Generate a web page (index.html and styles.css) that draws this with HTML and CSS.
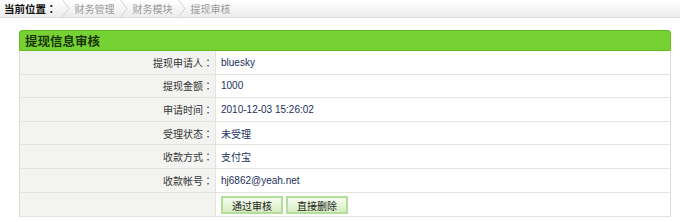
FILE: index.html
```html
<!DOCTYPE html>
<html lang="zh-CN">
<head>
  <meta charset="UTF-8">
  <title>提现审核</title>
  <link rel="stylesheet" href="styles.css">
</head>
<body>
<div class="crumbs">
  <span class="here" lang="zh-TW">当前位置：</span>
  <span class="sep"><svg width="8" height="17" viewBox="0 0 8 17"><path d="M0.5 0 L7 8.5 L0.5 17" fill="none" stroke="#d2d2d2" stroke-width="1"/></svg></span>
  <span class="crumb">财务管理</span>
  <span class="sep"><svg width="8" height="17" viewBox="0 0 8 17"><path d="M0.5 0 L7 8.5 L0.5 17" fill="none" stroke="#d2d2d2" stroke-width="1"/></svg></span>
  <span class="crumb">财务模块</span>
  <span class="sep"><svg width="8" height="17" viewBox="0 0 8 17"><path d="M0.5 0 L7 8.5 L0.5 17" fill="none" stroke="#d2d2d2" stroke-width="1"/></svg></span>
  <span class="crumb">提现审核</span>
</div>

<div class="panel">
  <div class="panel-title">提现信息审核</div>
  <table class="info">
    <tr><th lang="zh-TW">提现申请人：</th><td>bluesky</td></tr>
    <tr><th lang="zh-TW">提现金额：</th><td>1000</td></tr>
    <tr><th lang="zh-TW">申请时间：</th><td>2010-12-03 15:26:02</td></tr>
    <tr><th lang="zh-TW">受理状态：</th><td>未受理</td></tr>
    <tr><th lang="zh-TW">收款方式：</th><td>支付宝</td></tr>
    <tr><th lang="zh-TW">收款帐号：</th><td>hj6862@yeah.net</td></tr>
    <tr><th></th><td class="actions"><button class="btn">通过审核</button><button class="btn">直接删除</button></td></tr>
  </table>
</div>
</body>
</html>
```

FILE: styles.css
```css
body {
  margin: 0;
  background: #fff;
  font-family: "Liberation Sans", "Noto Sans CJK SC", sans-serif;
  font-size: 10px;
  color: #333;
}

.crumbs {
  display: flex;
  align-items: center;
  height: 17px;
  padding-left: 4px;
  background: linear-gradient(#ffffff, #ececec);
  border-bottom: 1px solid #dcdcdc;
}

.crumbs .here {
  font-family: "Noto Sans CJK TC", sans-serif;
  font-weight: bold;
  font-size: 10.5px;
  color: #111;
}

.crumbs .sep {
  display: flex;
  margin: 0 5px 0 5px;
}

.crumbs .crumb {
  color: #999;
}

.panel {
  margin: 12px 9px 0 19px;
  width: 652px;
}

.panel-title {
  height: 19px;
  line-height: 19px;
  padding-left: 5px;
  background: #76d232;
  border: 1px solid #62bb22;
  border-radius: 3px 3px 0 0;
  font-family: "Noto Sans CJK SC", sans-serif;
  font-weight: bold;
  font-size: 12.5px;
  color: #1a3503;
}

.info {
  width: 100%;
  border-collapse: collapse;
  border: 1px solid #dcdcd2;
  border-top: none;
}

.info th,
.info td {
  height: 22.6px;
  padding: 0 5px;
  border-bottom: 1px solid #e4e4da;
  font-weight: normal;
}

.info th {
  width: 188px;
  text-align: right;
  padding-right: 2px;
  background: #f3f3f1;
  border-right: 1px solid #e4e4da;
  font-family: "Noto Sans CJK TC", sans-serif;
  color: #333;
}

.info td {
  color: #22305c;
  background: #fff;
}

.info .actions {
  padding-top: 1px;
}

.btn {
  height: 18px;
  width: 62px;
  margin-right: 3px;
  padding: 0;
  border: 2px solid #b4dc9a;
  background: linear-gradient(#f6fcef, #d5edc3);
  font-family: "Noto Sans CJK SC", sans-serif;
  font-size: 10px;
  color: #222;
}
```
